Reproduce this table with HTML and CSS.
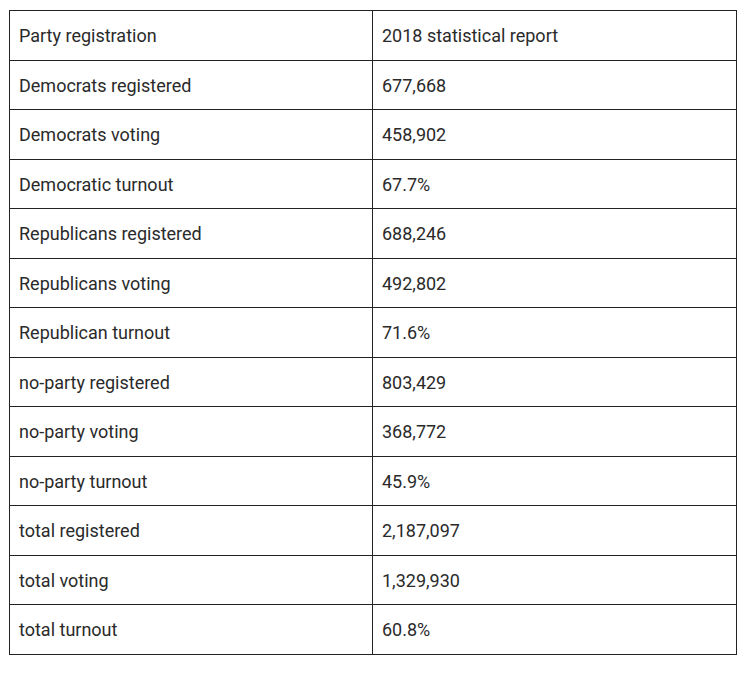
FILE: index.html
```html
<!DOCTYPE html>
<html>
<head>
<meta charset="utf-8">
<link rel="stylesheet" href="styles.css">
</head>
<body>
<div class="wrap">
<table class="stats">
<tr><td class="first">Party registration</td><td>2018 statistical report</td></tr>
<tr><td class="first">Democrats registered</td><td>677,668</td></tr>
<tr><td class="first">Democrats voting</td><td>458,902</td></tr>
<tr><td class="first">Democratic turnout</td><td>67.7%</td></tr>
<tr><td class="first">Republicans registered</td><td>688,246</td></tr>
<tr><td class="first">Republicans voting</td><td>492,802</td></tr>
<tr><td class="first">Republican turnout</td><td>71.6%</td></tr>
<tr><td class="first">no-party registered</td><td>803,429</td></tr>
<tr><td class="first">no-party voting</td><td>368,772</td></tr>
<tr><td class="first">no-party turnout</td><td>45.9%</td></tr>
<tr><td class="first">total registered</td><td>2,187,097</td></tr>
<tr><td class="first">total voting</td><td>1,329,930</td></tr>
<tr><td class="first">total turnout</td><td>60.8%</td></tr>
</table>
</div>
</body>
</html>
```
FILE: styles.css
```css
html, body {
  margin: 0;
  padding: 0;
  background: #fff;
}
.wrap {
  padding: 10px 9px;
}
.stats {
  width: 728px;
  table-layout: fixed;
  border-collapse: collapse;
  font-family: Roboto, "Liberation Sans", sans-serif;
  font-size: 18px;
  color: #2a2a2a;
}
.stats td {
  border: 1px solid #222;
  padding: 16px 9px 14px;
  line-height: 18.5px;
  text-align: left;
  vertical-align: middle;
}
.stats td.first {
  width: 344px;
}
```
